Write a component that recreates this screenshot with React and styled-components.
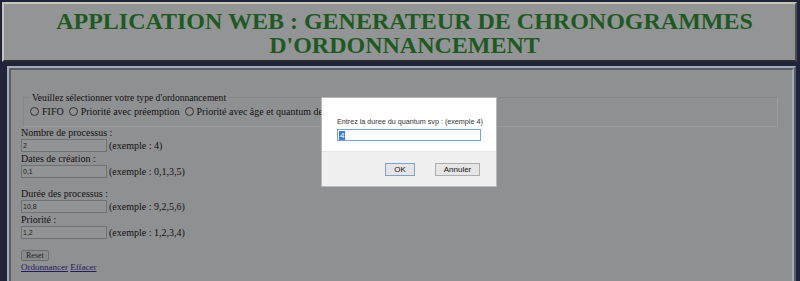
import styled, { createGlobalStyle } from "styled-components";

const GlobalStyle = createGlobalStyle`
  html, body {
    margin: 0;
    padding: 0;
    background-color: #20233a;
    font-family: "Liberation Serif", "Times New Roman", serif;
  }
  #root {
    position: relative;
    height: 281px;
    overflow: hidden;
  }
`;

const examples = [
  { label: "Nombre de processus :", value: "2", hint: "(exemple : 4)" },
  { label: "Dates de création :", value: "0,1", hint: "(exemple : 0,1,3,5)", spaced: true },
  { label: "Durée des processus :", value: "10,8", hint: "(exemple : 9,2,5,6)" },
  { label: "Priorité :", value: "1,2", hint: "(exemple : 1,2,3,4)" },
];

const App = () => {
  return (
    <>
      <GlobalStyle />
      <Page>
        <Header>
          <Title>
            APPLICATION WEB : GENERATEUR DE CHRONOGRAMMES
            <br />
            D'ORDONNANCEMENT
          </Title>
        </Header>
        <Panel>
          <Fieldset>
            <Legend>Veuillez sélectionner votre type d'ordonnancement</Legend>
            <RadioRow>
              <RadioLabel>
                <Radio /> FIFO
              </RadioLabel>
              <RadioLabel>
                <Radio /> Priorité avec préemption
              </RadioLabel>
              <RadioLabel>
                <Radio /> Priorité avec âge et quantum de temps
              </RadioLabel>
            </RadioRow>
          </Fieldset>
          {examples.map((item, i) => (
            <Field key={item.label} $first={i === 0} $spaced={item.spaced}>
              <FieldLabel>{item.label}</FieldLabel>
              <FieldRow>
                <TextBox>{item.value}</TextBox>
                <Hint>{item.hint}</Hint>
              </FieldRow>
            </Field>
          ))}
          <ResetButton>Reset</ResetButton>
          <Links>
            <Link>Ordonnancer</Link> <Link>Effacer</Link>
          </Links>
        </Panel>
      </Page>
      <Dialog>
        <DialogBody>
          <Prompt>Entrez la duree du quantum svp : (exemple 4)</Prompt>
          <PromptInput>
            <Selected>4</Selected>
          </PromptInput>
        </DialogBody>
        <DialogFooter>
          <DialogButton $primary>OK</DialogButton>
          <DialogButton>Annuler</DialogButton>
        </DialogFooter>
      </Dialog>
    </>
  );
};

export default App;

const Page = styled.div`
  display: flex;
  flex-direction: column;
  padding: 2px 3px 0 2px;
  gap: 4px;
`;

const Header = styled.div`
  height: 56px;
  background-color: #939495;
  border: 2px solid;
  border-color: #c4c6b6 #4a4c50 #2a2c30 #c4c6b6;
  display: flex;
  align-items: center;
  justify-content: center;
`;

const Title = styled.h1`
  margin: 2px 0 0 0;
  text-align: center;
  color: #1d5a22;
  font-size: 24px;
  line-height: 24px;
  font-weight: bold;
  font-family: "Liberation Serif", "Times New Roman", serif;
  padding-left: 10px;
`;

const Panel = styled.div`
  margin: 0 1px 0 5px;
  background-color: #8f9091;
  border: 4px ridge #a3acbb;
  padding: 22px 10px 20px 10px;
  display: flex;
  flex-direction: column;
  align-items: flex-start;
  color: #111;
  font-size: 10px;
`;

const Fieldset = styled.fieldset`
  align-self: stretch;
  margin: 0 4px 0 2px;
  padding: 3px 8px 9px 6px;
  border: 1px solid #888a8b;
  border-color: #858687 #9a9b9c #9a9b9c #858687;
`;

const Legend = styled.legend`
  padding: 0 2px;
  font-size: 9.6px;
  color: #111;
`;

const RadioRow = styled.div`
  display: flex;
  gap: 5px;
  white-space: nowrap;
  font-size: 10px;
`;

const RadioLabel = styled.span`
  display: flex;
  align-items: center;
  gap: 3px;
`;

const Radio = styled.span`
  width: 7px;
  height: 7px;
  border: 1px solid #333;
  border-radius: 50%;
  background-color: #909090;
`;

const Field = styled.div`
  display: flex;
  flex-direction: column;
  margin-top: ${(p) => (p.$first ? "-1px" : "0")};
  margin-bottom: ${(p) => (p.$spaced ? "9px" : "0")};
`;

const FieldLabel = styled.div`
  font-size: 10px;
  line-height: 13px;
`;

const FieldRow = styled.div`
  display: flex;
  align-items: center;
  gap: 2px;
  font-size: 10px;
`;

const TextBox = styled.div`
  width: 82px;
  height: 11px;
  border: 1px solid #707173;
  background-color: #929394;
  font-family: "Liberation Sans", Arial, sans-serif;
  font-size: 7px;
  line-height: 11px;
  padding: 0 1px;
  color: #222;
`;

const Hint = styled.span`
  line-height: 12px;
`;

const ResetButton = styled.div`
  margin-top: 11px;
  height: 9px;
  padding: 0 4px;
  border: 1px solid #6b6c6e;
  border-radius: 2px;
  background-color: #8a8b8c;
  font-size: 8px;
  line-height: 9px;
  color: #222;
`;

const Links = styled.div`
  margin-top: 1px;
  font-size: 9px;
`;

const Link = styled.a`
  color: #241a60;
  text-decoration: underline;
  cursor: pointer;
`;

const Dialog = styled.div`
  position: absolute;
  left: 321px;
  top: 97px;
  width: 174px;
  height: 88px;
  background-color: #ffffff;
  border: 1px solid #b8b8b8;
  display: flex;
  flex-direction: column;
  font-family: "Liberation Sans", Arial, sans-serif;
`;

const DialogBody = styled.div`
  height: 53px;
  padding: 19px 15px 0 15px;
  box-sizing: border-box;
  display: flex;
  flex-direction: column;
  gap: 3px;
`;

const Prompt = styled.div`
  font-size: 7.2px;
  color: #333;
  white-space: nowrap;
`;

const PromptInput = styled.div`
  height: 10px;
  border: 1px solid #7aa3d8;
  display: flex;
  align-items: center;
  padding: 0 1px;
`;

const Selected = styled.span`
  background-color: #3b7fd4;
  color: #fff;
  font-size: 8px;
  line-height: 9px;
  padding: 0 1px;
`;

const DialogFooter = styled.div`
  flex: 1;
  background-color: #f0f0f0;
  border-top: 1px solid #e4e4e4;
  display: flex;
  justify-content: flex-end;
  align-items: center;
  gap: 20px;
  padding: 0 16px 0 0;
`;

const DialogButton = styled.div`
  width: ${(p) => (p.$primary ? "28px" : "43px")};
  height: 11px;
  border: 1px solid ${(p) => (p.$primary ? "#7aa3d8" : "#adadad")};
  background-color: #e6e6e6;
  font-size: 8px;
  line-height: 11px;
  text-align: center;
  color: #111;
`;
